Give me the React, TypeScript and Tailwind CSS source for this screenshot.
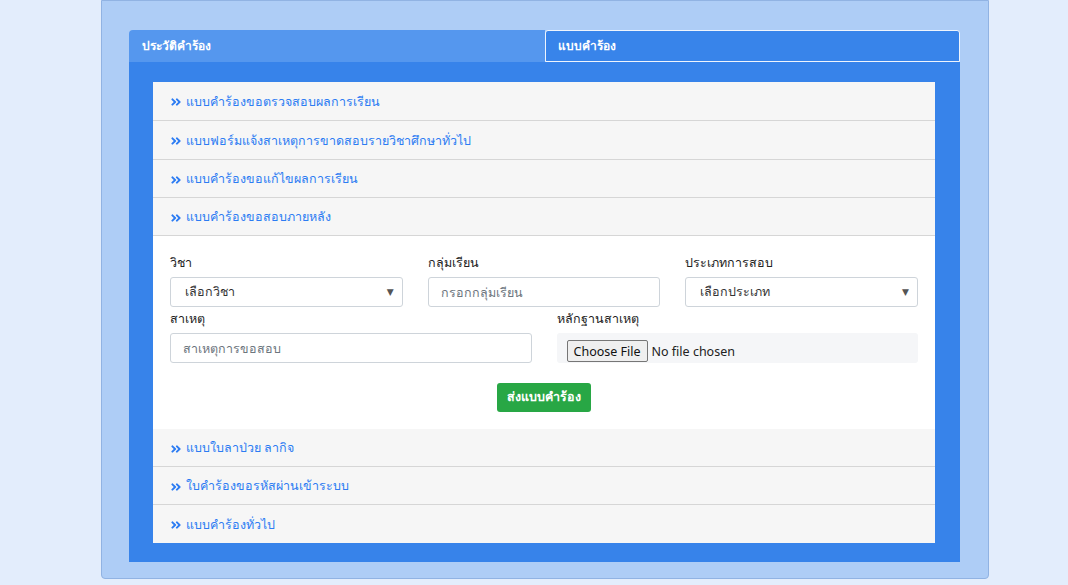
import React from "react";
import { FaAngleDoubleRight } from "react-icons/fa";

const topItems = [
  { title: "แบบคำร้องขอตรวจสอบผลการเรียน", h: "h-[39px]" },
  { title: "แบบฟอร์มแจ้งสาเหตุการขาดสอบรายวิชาศึกษาทั่วไป", h: "h-[39px]" },
  { title: "แบบคำร้องขอแก้ไขผลการเรียน", h: "h-[38px]" },
  { title: "แบบคำร้องขอสอบภายหลัง", h: "h-[38px]" },
];

const bottomItems = [
  "แบบใบลาป่วย ลากิจ",
  "ใบคำร้องขอรหัสผ่านเข้าระบบ",
  "แบบคำร้องทั่วไป",
];

const AccordionHead = ({ title, h = "h-[38px]", last = false }: { title: string; h?: string; last?: boolean }) => (
  <div
    className={`${h} flex items-center gap-[4px] pl-[17px] pt-[2px] bg-[#f6f6f6] text-[12.5px] text-[#2c7cf3] ${
      last ? "" : "border-b border-[#d6d6d6]"
    }`}
  >
    <FaAngleDoubleRight size={12} className="text-[#2c7cf3]" />
    <span>{title}</span>
  </div>
);

const Select = ({ text }: { text: string }) => (
  <div className="h-[30px] flex items-center justify-between pl-[14px] pr-[8px] border border-[#ced4da] rounded-[3px] bg-white text-[12.5px] text-[#333]">
    <span>{text}</span>
    <span className="text-[9px] text-[#555]">▼</span>
  </div>
);

const Field = ({ placeholder }: { placeholder: string }) => (
  <input
    placeholder={placeholder}
    className="h-[30px] w-full px-[12px] border border-[#ced4da] rounded-[3px] bg-white text-[12.5px] placeholder:text-[#6c757d] outline-none"
  />
);

const Label = ({ children }: { children: React.ReactNode }) => (
  <div className="leading-[13px] mb-[8px]">{children}</div>
);

export default function App() {
  return (
    <div
      className="min-h-[585px] bg-[#e3edfc]"
      style={{ fontFamily: '"Noto Sans", "DejaVu Sans", sans-serif' }}
    >
      <div className="ml-[101px] w-[888px] h-[579px] bg-[#aecdf6] border border-[#91b3e3] rounded-b-[4px] pt-[29px] px-[27px]">
        <div className="w-[831px]">
          <div className="flex h-8 text-[12px] font-semibold text-white">
            <div className="w-[416px] bg-[#5597ee] rounded-tl-[4px] flex items-center pl-[13px]">
              ประวัติคำร้อง
            </div>
            <div className="flex-1 bg-[#3884ea] border border-[#eef4fd] rounded-t-[3px] flex items-center pl-[12px]">
              แบบคำร้อง
            </div>
          </div>
          <div className="bg-[#3783ea] pt-5 pb-[19px] pl-6 pr-[25px]">
            <div className="bg-white">
              {topItems.map((t) => (
                <AccordionHead key={t.title} title={t.title} h={t.h} />
              ))}
              <div className="px-[17px] pt-5 pb-[17px] text-[12.5px] text-[#222]">
                <div className="grid grid-cols-3 gap-x-[25px]">
                  <div>
                    <Label>วิชา</Label>
                    <Select text="เลือกวิชา" />
                  </div>
                  <div>
                    <Label>กลุ่มเรียน</Label>
                    <Field placeholder="กรอกกลุ่มเรียน" />
                  </div>
                  <div>
                    <Label>ประเภทการสอบ</Label>
                    <Select text="เลือกประเภท" />
                  </div>
                </div>
                <div className="grid grid-cols-2 gap-x-[25px] mt-[5px]">
                  <div>
                    <Label>สาเหตุ</Label>
                    <Field placeholder="สาเหตุการขอสอบ" />
                  </div>
                  <div>
                    <Label>หลักฐานสาเหตุ</Label>
                    <div className="h-[30px] flex items-start pt-[7px] pl-[10px] bg-[#f5f6f8] rounded-[3px]">
                      <input
                        type="file"
                        className="text-[12.5px] leading-[22px] text-[#222] file:h-[22px] file:px-[6px] file:mr-[4px] file:bg-[#efefef] file:border file:border-[#767676] file:rounded-[2px] file:text-[#111]"
                      />
                    </div>
                  </div>
                </div>
                <div className="flex justify-center mt-5">
                  <button className="h-[29px] px-[10px] rounded-[3px] bg-[#28a745] text-white text-[12.5px] font-semibold">
                    ส่งแบบคำร้อง
                  </button>
                </div>
              </div>
              {bottomItems.map((t, i) => (
                <AccordionHead key={t} title={t} last={i === bottomItems.length - 1} />
              ))}
            </div>
          </div>
        </div>
      </div>
    </div>
  );
}
